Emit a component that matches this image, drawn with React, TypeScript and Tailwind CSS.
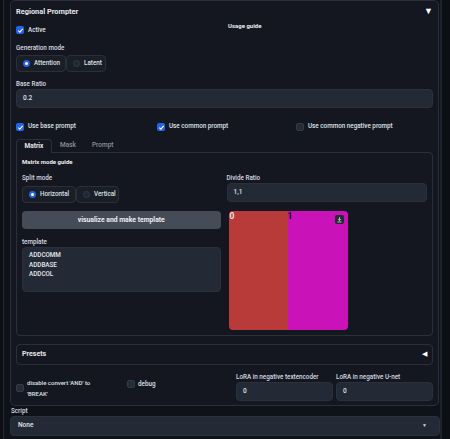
import React from 'react';

const font = { fontFamily: "Roboto, 'Noto Sans', sans-serif" };

function Check({ on }: { on?: boolean }) {
  return on ? (
    <span className="flex h-[8px] w-[8px] shrink-0 items-center justify-center rounded-[2px] bg-[#2563eb]">
      <svg viewBox="0 0 8 8" className="h-[7px] w-[7px]">
        <path d="M1.5 4.2 3.2 5.8 6.5 2.2" fill="none" stroke="white" strokeWidth="1.3" />
      </svg>
    </span>
  ) : (
    <span className="h-[8px] w-[8px] shrink-0 rounded-[2px] border border-[#343b47] bg-[#262c37]" />
  );
}

function Radio({ label, on, w }: { label: string; on?: boolean; w: string }) {
  return (
    <div
      className={`flex h-[17px] ${w} items-center gap-[4px] rounded-[4px] border border-[#2a303b] bg-[#1a1e27] pl-[6px] text-[6.3px] font-medium text-[#dfe2e7]`}
    >
      {on ? (
        <span className="flex h-[7px] w-[7px] items-center justify-center rounded-full bg-[#2563eb]">
          <span className="h-[3px] w-[3px] rounded-full bg-white" />
        </span>
      ) : (
        <span className="h-[7px] w-[7px] rounded-full border border-[#333a46] bg-[#222833]" />
      )}
      {label}
    </div>
  );
}

function Input({ value, cls }: { value: string; cls: string }) {
  return (
    <div
      className={`flex items-center rounded-[4px] border border-[#2a313c] bg-[#232a36] pl-[6px] text-[6.5px] font-medium text-[#dfe2e7] ${cls}`}
    >
      {value}
    </div>
  );
}

function Label({ children, cls = '' }: { children: React.ReactNode; cls?: string }) {
  return (
    <div className={`h-[10px] whitespace-nowrap text-[6.3px] font-medium leading-[10px] text-[#d9dce2] ${cls}`}>
      {children}
    </div>
  );
}

export default function App() {
  return (
    <div className="flex h-[439px] w-[450px] overflow-hidden bg-[#0f1218]" style={font}>
      <div className="h-full w-[4px] border-r border-[#232833] bg-[#0b0e13]" />
      <div className="w-[6px]" />
      <div className="flex w-[429px] flex-col">
        {/* Regional Prompter panel */}
        <div className="h-[406px] rounded-[5px] border border-[#2a303b] bg-[#14171f] px-[5px]">
          <div className="flex h-[21px] items-center justify-between">
            <span className="text-[7.4px] font-bold text-[#e5e7eb]">Regional Prompter</span>
            <span className="text-[9px] leading-none text-white">▼</span>
          </div>

          <div className="flex h-[16px]">
            <div className="flex w-[212px] items-center gap-[4px] self-start pt-[4px]">
              <Check on />
              <span className="text-[6.3px] font-medium leading-[8px] text-[#dfe2e7]">Active</span>
            </div>
            <span className="text-[6px] font-bold leading-[8px] text-[#eceef2]">Usage guide</span>
          </div>

          <Label cls="mt-[5px]">Generation mode</Label>
          <div className="mt-[2px] flex">
            <Radio label="Attention" on w="w-[50px]" />
            <Radio label="Latent" w="w-[40px]" />
          </div>

          <Label cls="mt-[7px]">Base Ratio</Label>
          <Input value="0.2" cls="h-[19px]" />

          <div className="mt-[14px] flex h-[10px] items-center text-[6.3px] font-medium text-[#dfe2e7]">
            <div className="flex w-[141px] items-center gap-[4px]">
              <Check on />
              Use base prompt
            </div>
            <div className="flex w-[139px] items-center gap-[4px]">
              <Check on />
              Use common prompt
            </div>
            <div className="flex items-center gap-[4px]">
              <Check />
              Use common negative prompt
            </div>
          </div>

          {/* tabs */}
          <div className="relative z-10 mt-[7px] flex h-[14px] items-end text-[6.5px]">
            <div className="flex h-[14px] w-[36px] items-center justify-center rounded-t-[4px] border border-b-0 border-[#2a303b] bg-[#14171f] font-bold text-[#e5e7eb]">
              Matrix
            </div>
            <div className="flex h-[14px] items-center pl-[8px] font-medium text-[#8b919c]">Mask</div>
            <div className="flex h-[14px] items-center pl-[16px] font-medium text-[#8b919c]">Prompt</div>
          </div>
          <div className="-mt-px h-[184px] rounded-b-[4px] rounded-tr-[4px] border border-[#2a303b] px-[5px] pt-[4px]">
            <div className="h-[10px] text-[6px] font-bold leading-[10px] text-[#eceef2]">Matrix mode guide</div>
            <div className="flex gap-[6px]">
              <div className="w-[199px]">
                <Label cls="mt-[6px]">Split mode</Label>
                <div className="mt-[3px] flex">
                  <Radio label="Horizontal" on w="w-[54px]" />
                  <Radio label="Vertical" w="w-[43px]" />
                </div>
                <div className="mt-[8px] flex h-[18px] items-center justify-center rounded-[4px] bg-[#464c57] text-[6.8px] font-bold text-[#eceef2]">
                  visualize and make template
                </div>
                <Label cls="mt-[8px]">template</Label>
                <div className="h-[45px] rounded-[4px] border border-[#2a313c] bg-[#232a36] pl-[6px] pt-[3px] text-[6.3px] font-medium leading-[9.5px] text-[#e5e7eb]">
                  <div>ADDCOMM</div>
                  <div>ADDBASE</div>
                  <div>ADDCOL</div>
                </div>
              </div>
              <div className="w-[201px]">
                <Label cls="mt-[6px]">Divide Ratio</Label>
                <Input value="1,1" cls="h-[19px]" />
                <div className="relative ml-[2px] mt-[9px] flex h-[119px] w-[119px] overflow-hidden rounded-[4px]">
                  <div className="h-full w-1/2 bg-[#b83a39]" />
                  <div className="h-full w-1/2 bg-[#c912b7]" />
                  <span className="absolute left-[1px] top-[1px] text-[8.5px] font-bold leading-[9px] text-[#f3e5e5]">0</span>
                  <span className="absolute left-[59px] top-[1px] text-[8.5px] font-bold leading-[9px] text-black">1</span>
                  <span className="absolute right-[4px] top-[4px] flex h-[9px] w-[9px] items-center justify-center rounded-[2px] bg-[#262b35]">
                    <svg viewBox="0 0 10 10" className="h-[7px] w-[7px]">
                      <path d="M5 1.5v5M3 4.5l2 2 2-2M2 8.5h6" fill="none" stroke="#cfd3da" strokeWidth="1.2" />
                    </svg>
                  </span>
                </div>
              </div>
            </div>
          </div>

          {/* presets */}
          <div className="mt-[8px] flex h-[21px] items-center justify-between rounded-[4px] border border-[#2a303b] pl-[5px] pr-[5px]">
            <span className="text-[7px] font-bold text-[#e5e7eb]">Presets</span>
            <span className="text-[7px] leading-none text-white">◀</span>
          </div>

          <div className="mt-[1px] flex">
            <div className="flex w-[111px] items-center gap-[3px] pt-[8px]">
              <Check />
              <span className="text-[6px] font-medium leading-[11px] text-[#dfe2e7]">
                disable convert 'AND' to
                <br />
                'BREAK'
              </span>
            </div>
            <div className="flex w-[109px] items-center gap-[3px] self-start pt-[14px]">
              <Check />
              <span className="text-[6.3px] font-medium leading-[8px] text-[#dfe2e7]">debug</span>
            </div>
            <div className="w-[97px] pt-[6px]">
              <Label>LoRA in negative textencoder</Label>
              <Input value="0" cls="h-[19px]" />
            </div>
            <div className="ml-[3px] w-[97px] pt-[6px]">
              <Label>LoRA in negative U-net</Label>
              <Input value="0" cls="h-[19px]" />
            </div>
          </div>
        </div>

        <div className="mt-[1px] h-[9px] pl-[1px] text-[6.3px] font-medium leading-[9px] text-[#d9dce2]">Script</div>
        <div className="flex h-[20px] w-[430px] items-center justify-between rounded-[4px] border border-[#2a313c] bg-[#232a36] pl-[7px] pr-[12px] text-[6.5px] font-medium text-[#e5e7eb]">
          None
          <span className="text-[5px] text-[#cfd3da]">▼</span>
        </div>
      </div>
      <div className="ml-[1px] h-full w-[2px] bg-[#1d222c]" />
      <div className="h-full flex-1 bg-[#0c0f14]" />
    </div>
  );
}
